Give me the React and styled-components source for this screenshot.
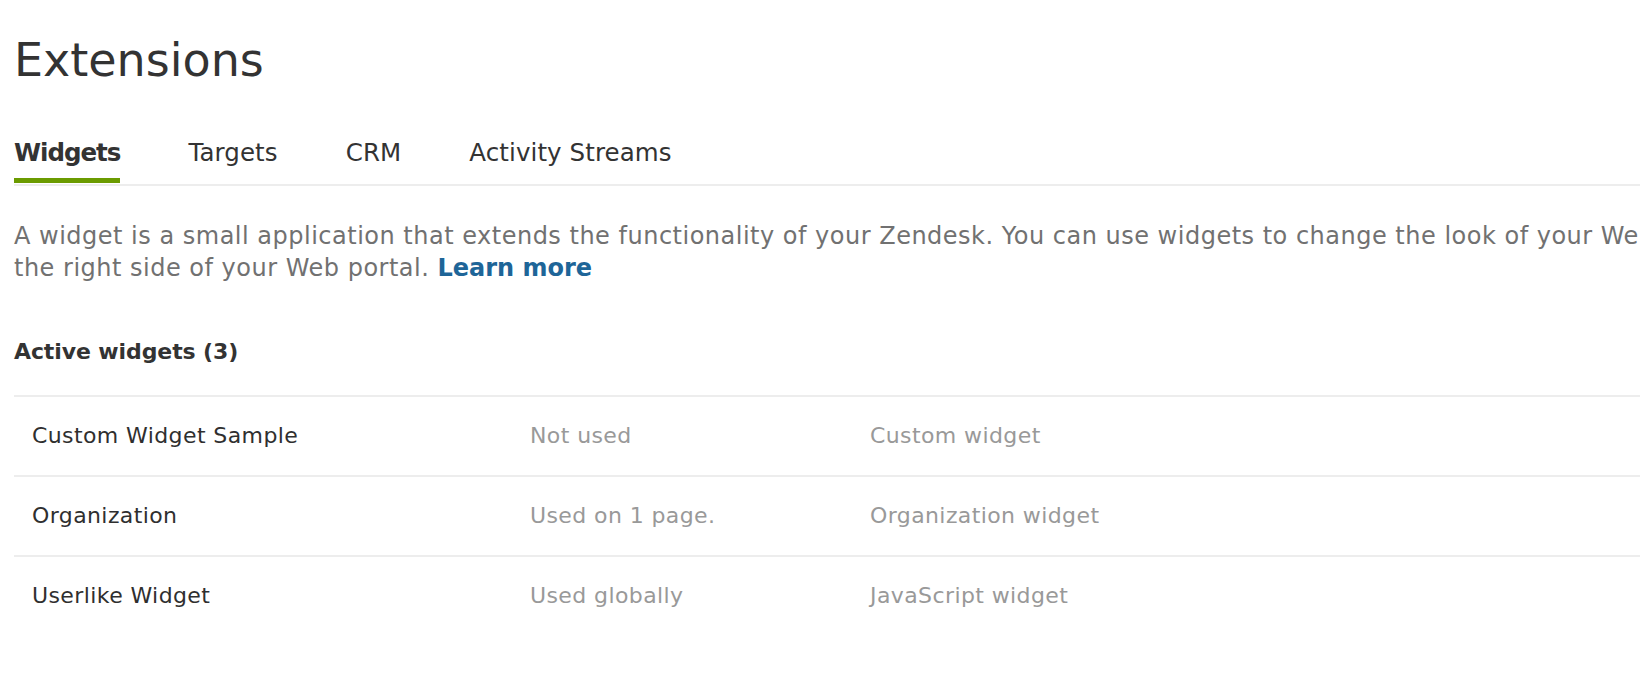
import styled, { createGlobalStyle } from "styled-components";

const GlobalStyle = createGlobalStyle`
  html, body {
    margin: 0;
    padding: 0;
    background: #ffffff;
    overflow: hidden;
  }

  body {
    font-family: "DejaVu Sans", "Liberation Sans", sans-serif;
    color: #333333;
  }
`;

const Page = styled.div`
  padding: 33px 0 0 14px;
  overflow: hidden;
`;

const Title = styled.h1`
  margin: 0;
  font-size: 46px;
  line-height: 54px;
  font-weight: normal;
  color: #333333;
`;

const TabList = styled.nav`
  display: flex;
  gap: 68px;
  margin-top: 51px;
  border-bottom: 2px solid #ededed;
`;

const Tab = styled.a`
  display: block;
  padding-bottom: 10px;
  margin-bottom: 1px;
  font-size: 24.5px;
  line-height: 30px;
  color: #333333;
  font-weight: ${(props) => (props.active ? "bold" : "normal")};
  letter-spacing: ${(props) => (props.active ? "-1px" : "0.1px")};
  border-bottom: 5px solid ${(props) => (props.active ? "#6b9b00" : "transparent")};
  cursor: pointer;
`;

const Intro = styled.p`
  margin: 35px 0 0;
  font-size: 24px;
  line-height: 31.5px;
  letter-spacing: 0.5px;
  color: #717171;
  white-space: nowrap;
`;

const LearnMore = styled.a`
  font-weight: bold;
  letter-spacing: 0;
  color: #1e6598;
  text-decoration: none;
`;

const SectionTitle = styled.h2`
  margin: 54px 0 0;
  font-size: 22px;
  line-height: 28px;
  font-weight: bold;
  letter-spacing: -0.1px;
  color: #333333;
`;

const WidgetTable = styled.div`
  margin-top: 29px;
`;

const Row = styled.div`
  display: grid;
  grid-template-columns: 498px 340px 1fr;
  height: 78px;
  align-items: center;
  border-top: 2px solid #ededed;
`;

const Cell = styled.div`
  padding-left: 18px;
  font-size: 22px;
  line-height: 28px;
  letter-spacing: 0.4px;
  color: ${(props) => (props.muted ? "#999999" : "#2f2f2f")};
  white-space: nowrap;
`;

const tabs = ["Widgets", "Targets", "CRM", "Activity Streams"];

const widgets = [
  { name: "Custom Widget Sample", usage: "Not used", kind: "Custom widget" },
  { name: "Organization", usage: "Used on 1 page.", kind: "Organization widget" },
  { name: "Userlike Widget", usage: "Used globally", kind: "JavaScript widget" },
];

function App() {
  return (
    <>
      <GlobalStyle />
      <Page>
        <Title>Extensions</Title>

        <TabList>
          {tabs.map((tab, i) => (
            <Tab key={tab} active={i === 0}>
              {tab}
            </Tab>
          ))}
        </TabList>

        <Intro>
          A widget is a small application that extends the functionality of your Zendesk. You can
          use widgets to change the look of your Web portal or add functionality to the sidebar on
          <br />
          the right side of your Web portal. <LearnMore href="#">Learn more</LearnMore>
        </Intro>

        <SectionTitle>Active widgets ({widgets.length})</SectionTitle>

        <WidgetTable>
          {widgets.map((w) => (
            <Row key={w.name}>
              <Cell>{w.name}</Cell>
              <Cell muted>{w.usage}</Cell>
              <Cell muted>{w.kind}</Cell>
            </Row>
          ))}
        </WidgetTable>
      </Page>
    </>
  );
}

export default App;
